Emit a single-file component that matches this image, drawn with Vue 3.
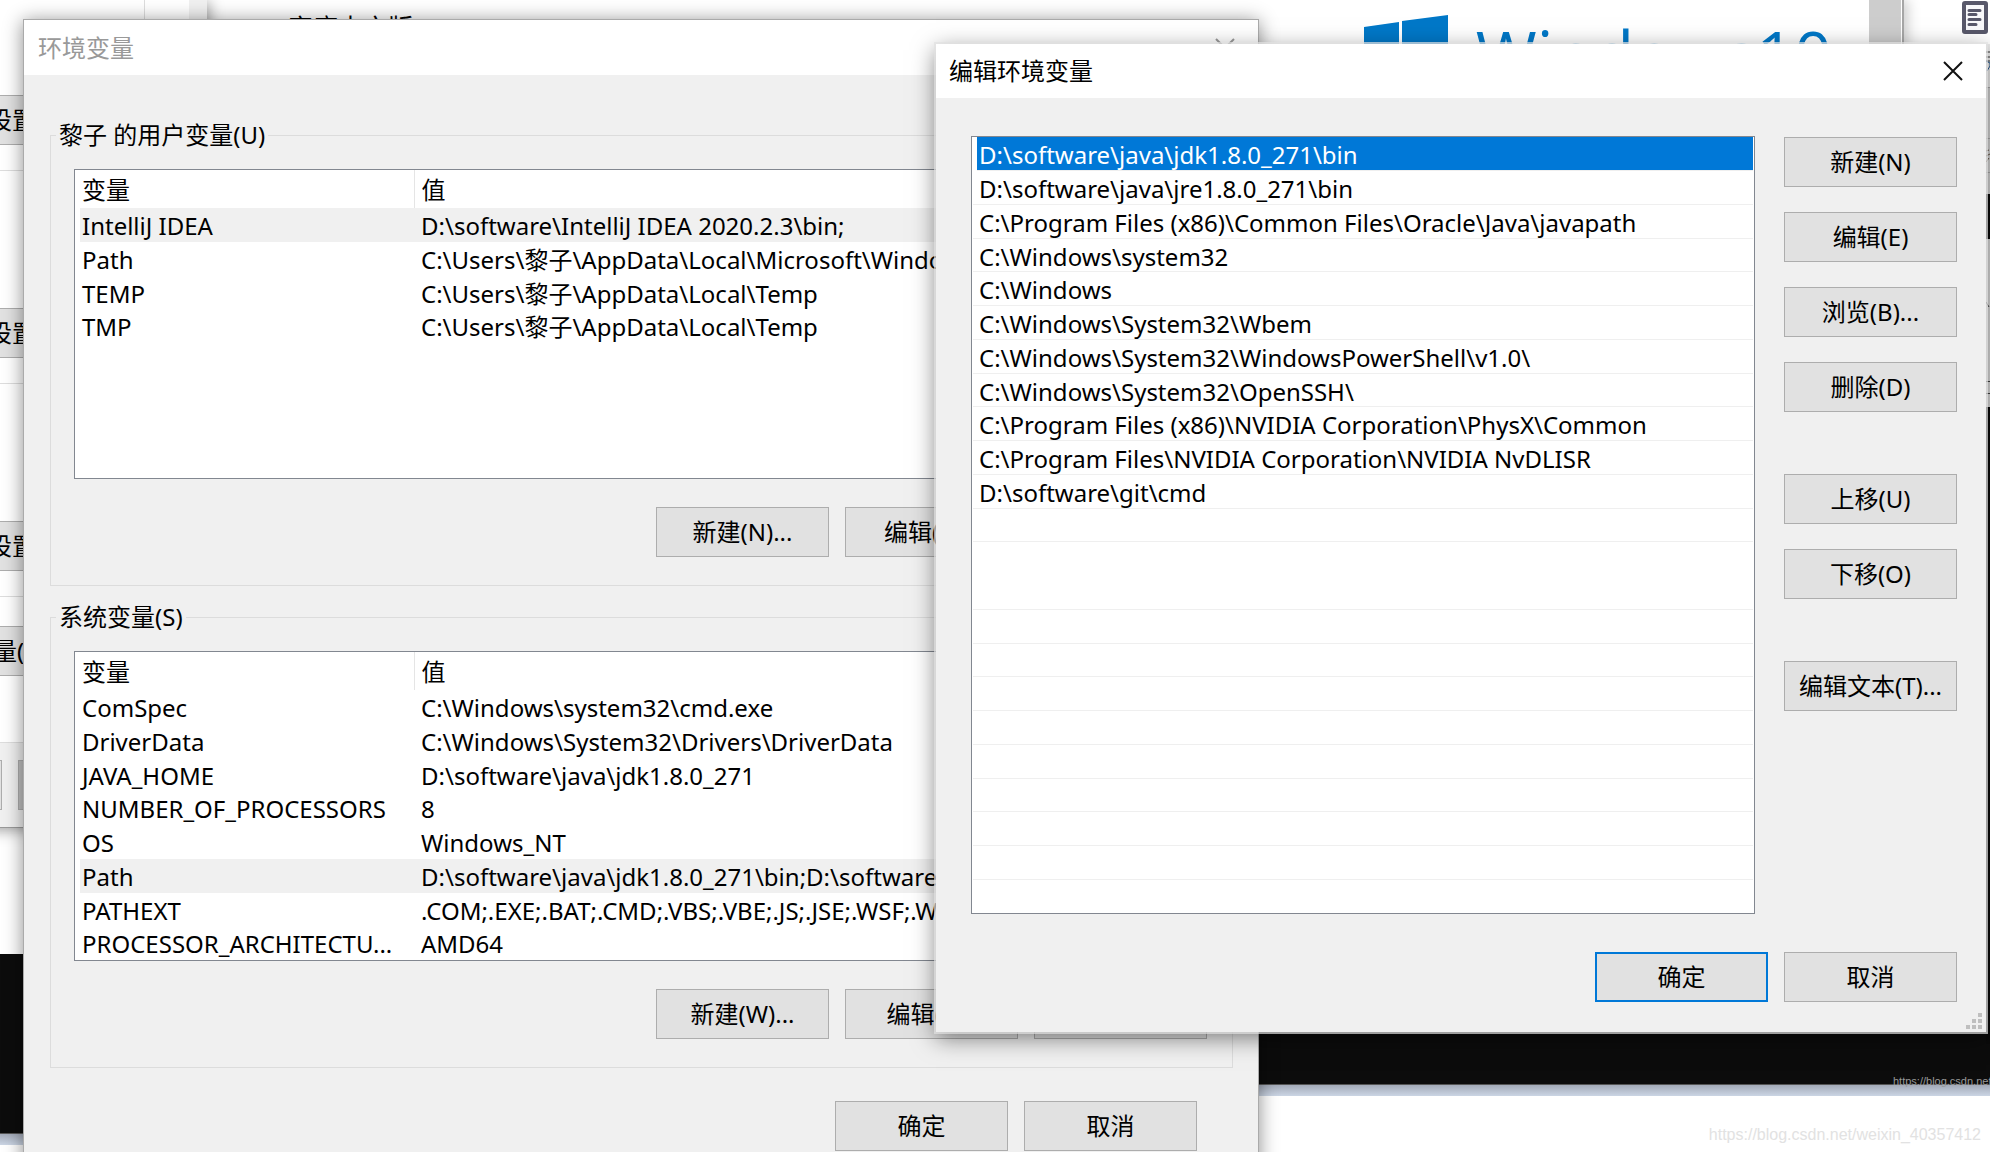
<script setup>
import { ref } from 'vue'

const userVars = [
  { name: 'IntelliJ IDEA', value: 'D:\\software\\IntelliJ IDEA 2020.2.3\\bin;' },
  { name: 'Path', value: 'C:\\Users\\黎子\\AppData\\Local\\Microsoft\\WindowsApps;' },
  { name: 'TEMP', value: 'C:\\Users\\黎子\\AppData\\Local\\Temp' },
  { name: 'TMP', value: 'C:\\Users\\黎子\\AppData\\Local\\Temp' },
]

const systemVars = [
  { name: 'ComSpec', value: 'C:\\Windows\\system32\\cmd.exe' },
  { name: 'DriverData', value: 'C:\\Windows\\System32\\Drivers\\DriverData' },
  { name: 'JAVA_HOME', value: 'D:\\software\\java\\jdk1.8.0_271' },
  { name: 'NUMBER_OF_PROCESSORS', value: '8' },
  { name: 'OS', value: 'Windows_NT' },
  { name: 'Path', value: 'D:\\software\\java\\jdk1.8.0_271\\bin;D:\\software\\java' },
  { name: 'PATHEXT', value: '.COM;.EXE;.BAT;.CMD;.VBS;.VBE;.JS;.JSE;.WSF;.WSH' },
  { name: 'PROCESSOR_ARCHITECTU...', value: 'AMD64' },
]

const groups = [
  { id: 'user', title: '黎子 的用户变量(U)', rows: userVars, picked: 0, actions: ['新建(N)...', '编辑(E)...', '删除(D)'] },
  { id: 'system', title: '系统变量(S)', rows: systemVars, picked: 5, actions: ['新建(W)...', '编辑(I)...', '删除(L)'] },
]

const paths = [
  'D:\\software\\java\\jdk1.8.0_271\\bin',
  'D:\\software\\java\\jre1.8.0_271\\bin',
  'C:\\Program Files (x86)\\Common Files\\Oracle\\Java\\javapath',
  'C:\\Windows\\system32',
  'C:\\Windows',
  'C:\\Windows\\System32\\Wbem',
  'C:\\Windows\\System32\\WindowsPowerShell\\v1.0\\',
  'C:\\Windows\\System32\\OpenSSH\\',
  'C:\\Program Files (x86)\\NVIDIA Corporation\\PhysX\\Common',
  'C:\\Program Files\\NVIDIA Corporation\\NVIDIA NvDLISR',
  'D:\\software\\git\\cmd',
  '', '', '', '', '', '', '', '', '', '', '',
]

const selected = ref(0)
const sideGroups = [
  ['新建(N)', '编辑(E)', '浏览(B)...', '删除(D)'],
  ['上移(U)', '下移(O)'],
  ['编辑文本(T)...'],
]
</script>

<template>
  <main class="desktop">
    <section class="console console-left"></section>
    <section class="console console-right">
      <span class="console-mark">https://blog.csdn.net</span>
    </section>

    <section class="about">
      <p class="edition">10 家庭中文版</p>
      <div class="brand">
        <svg class="flag" width="84" height="60" viewBox="0 0 84 60" aria-hidden="true">
          <path d="M0 12 35 7V60H0ZM38 6 84 0V60H38Z" fill="#0078c8" />
        </svg>
        <span class="brand-name">Windows<span class="brand-num">10</span></span>
      </div>
      <div class="scroll"></div>
    </section>

    <section class="edge">
      <svg class="doc" width="28" height="34" viewBox="0 0 28 34" aria-hidden="true">
        <rect x="3" y="3" width="22" height="29" rx="1" fill="#f8f8fa" stroke="#58586a" stroke-width="4" />
        <path d="M8 10.500H19M8 14.500H15M8 19.500H19M8 24.500H15" stroke="#58586a" stroke-width="3" stroke-linecap="round" />
      </svg>
      <svg class="slice" width="4" height="1044" viewBox="0 0 4 1044" aria-hidden="true">
        <path d="M0 44H4V367H0Z" fill="#d2d2d2" />
        <path d="M0 44H4V87H0Z" fill="#ececec" />
        <path d="M0 52H4M0 57H4M0 61H4" stroke="#333" />
        <path d="M0 61 4 63V66L1 71" stroke="#27598f" fill="none" />
        <path d="M0 87.500H4M0 138.500H4M0 172.500H4" stroke="#aaa" />
        <path d="M0 151 3 150M0 156 4 154M0 162 3 158" stroke="#665544" />
        <path d="M0 194H4V239H0ZM0 407H4V1044H0Z" fill="#0a0a0a" />
        <path d="M0 239H4V407H0Z" fill="#d8d8d8" />
        <path d="M0 239H2V407H0Z" fill="#e8e8e8" />
        <path d="M0 302 3 307M0 381.500H4M0 393.500H4" stroke="#444" />
      </svg>
    </section>

    <section class="sysprops">
      <div class="card card-a"><button type="button" class="btn back">设置(S)...</button></div>
      <div class="card card-b"><button type="button" class="btn back">设置(E)...</button></div>
      <div class="card card-b"><button type="button" class="btn back">设置(T)...</button></div>
      <div class="card card-c"><button type="button" class="btn back env-btn">环境变量(N)...</button></div>
      <footer class="sys-foot">
        <button type="button" class="btn foot-a" aria-label="确定"></button>
        <button type="button" class="btn foot-b" aria-label="取消"></button>
      </footer>
    </section>

    <section class="window env">
      <header class="titlebar">
        <h1 class="title">环境变量</h1>
        <button type="button" class="close" aria-label="关闭">
          <svg width="22" height="22" viewBox="0 0 22 22"><path d="M2 2 20 20M20 2 2 20" stroke="currentColor" stroke-width="2" /></svg>
        </button>
      </header>
      <div class="env-body">
        <fieldset v-for="g in groups" :key="g.id" class="group">
          <legend class="legend">{{ g.title }}</legend>
          <div class="table-box">
            <table class="vars">
              <thead>
                <tr><th class="name">变量</th><th>值</th></tr>
              </thead>
              <tbody>
                <tr v-for="(r, i) in g.rows" :key="r.name" :class="{ picked: i === g.picked }">
                  <td class="name">{{ r.name }}</td>
                  <td>{{ r.value }}</td>
                </tr>
              </tbody>
            </table>
          </div>
          <div class="actions">
            <button v-for="a in g.actions" :key="a" type="button" class="btn">{{ a }}</button>
          </div>
        </fieldset>
        <footer class="actions env-foot">
          <button type="button" class="btn">确定</button>
          <button type="button" class="btn">取消</button>
        </footer>
      </div>
    </section>

    <section class="window edit">
      <header class="titlebar">
        <h1 class="title">编辑环境变量</h1>
        <button type="button" class="close" aria-label="关闭">
          <svg width="22" height="22" viewBox="0 0 22 22"><path d="M2 2 20 20M20 2 2 20" stroke="currentColor" stroke-width="2" /></svg>
        </button>
      </header>
      <div class="edit-body">
        <ul class="paths" role="listbox" aria-label="Path">
          <li
            v-for="(p, i) in paths"
            :key="i"
            role="option"
            :aria-selected="i === selected"
            :class="['path', { selected: i === selected, plain: i === 12 }]"
            @click="p && (selected = i)"
          >{{ p }}</li>
        </ul>
        <div class="side">
          <div v-for="(s, i) in sideGroups" :key="i" class="side-group">
            <button v-for="b in s" :key="b" type="button" class="btn">{{ b }}</button>
          </div>
        </div>
      </div>
      <footer class="actions edit-foot">
        <button type="button" class="btn primary">确定</button>
        <button type="button" class="btn">取消</button>
      </footer>
      <svg class="grip" width="16" height="16" viewBox="0 0 16 16" aria-hidden="true">
        <path d="M12 0h4v4h-4zM6 6h4v4H6zM12 6h4v4h-4zM0 12h4v4H0zM6 12h4v4H6zM12 12h4v4h-4z" fill="#bfbfbf" />
      </svg>
    </section>

    <span class="watermark">https://blog.csdn.net/weixin_40357412</span>
  </main>
</template>

<style>
body {
  background: #fff;
}
</style>

<style scoped>
.desktop {
  position: relative;
  height: 100vh;
  overflow: hidden;
  background: #fff;
  color: #000;
  font-family: "Noto Sans", "Noto Sans CJK SC", sans-serif;
  font-size: 24px;
  line-height: 34px;
}

.desktop * {
  box-sizing: border-box;
}

.btn {
  width: 173px;
  height: 50px;
  padding: 0;
  border: 1px solid #adadad;
  background: #e1e1e1;
  color: #000;
  font: inherit;
  white-space: nowrap;
}

.btn.primary {
  border: 2px solid #0078d7;
}

/* windows behind the dialogs */
.console {
  position: absolute;
  background: #0c0c0c;
}

.console::after {
  content: "";
  position: absolute;
  left: 0;
  right: 0;
  top: 100%;
  height: 11px;
  border-top: 1px solid #555;
  background: linear-gradient(#a3aab8, #cbd5e4);
}

.console-left {
  left: 0;
  width: 300px;
  top: 954px;
  height: 179px;
  box-shadow: 0 200px 0 #e8e8e8;
}

.console-right {
  left: 1200px;
  right: 0;
  top: 1000px;
  height: 84px;
}

.console-mark {
  position: absolute;
  z-index: 1;
  left: 693px;
  bottom: -3px;
  height: 12px;
  overflow: hidden;
  color: #999;
  font-family: "Liberation Sans", sans-serif;
  font-size: 11px;
  line-height: 12px;
}

.about {
  position: absolute;
  left: 207px;
  right: 86px;
  top: 0;
  height: 300px;
  border-right: 2px solid #a6a6a6;
  background: #fff;
  box-shadow: 4px 0 12px rgba(0, 0, 0, 0.2);
}

.edition {
  position: absolute;
  left: 46px;
  top: 10px;
  margin: 0;
  font-size: 25px;
}

.brand {
  position: absolute;
  right: 70px;
  top: 15px;
  display: flex;
  gap: 28px;
}

.brand-name {
  display: flex;
  color: #0078c8;
  font-family: "Open Sans", sans-serif;
  font-size: 66px;
  line-height: 76px;
}

.scroll {
  position: absolute;
  right: 1px;
  top: 0;
  bottom: 0;
  width: 32px;
  background: #cdcdcd;
}

.edge {
  position: absolute;
  right: 0;
  top: 0;
}

.doc {
  position: absolute;
  right: 1px;
  top: 0;
}

.slice {
  display: block;
}

.sysprops {
  position: absolute;
  left: -100px;
  width: 307px;
  top: 0;
  height: 828px;
  display: flex;
  flex-direction: column;
  border-right: 18px solid #f0f0f0;
  border-bottom: 1px solid #999;
  background: #fff;
  box-shadow: 2px 2px 14px rgba(0, 0, 0, 0.4);
}

.card {
  display: flex;
  align-items: flex-end;
  padding-bottom: 25px;
  margin-right: 44px;
  border-right: 1px solid #ddd;
  border-bottom: 1px solid #ddd;
}

.card-a {
  height: 171px;
}

.card-b {
  height: 213px;
}

.card-c {
  height: 146px;
  padding-bottom: 66px;
}

.back {
  padding-left: 87px;
  text-align: left;
}

.env-btn {
  width: 240px;
  padding-left: 20px;
}

.sys-foot {
  flex: 1;
  display: flex;
  gap: 16px;
  padding: 17px 0 0;
  background: #f0f0f0;
}

.foot-a {
  width: 102px;
}

.foot-b {
  width: 120px;
  background: #c0c0c0;
}

/* dialogs */
.window {
  position: absolute;
  background: #f0f0f0;
}

.titlebar {
  display: flex;
  align-items: center;
  justify-content: space-between;
  height: 54px;
  padding-left: 13px;
  background: #fff;
}

.title {
  margin: 0;
  font-size: 24px;
  font-weight: 400;
}

.close {
  display: flex;
  padding: 22px;
  border: 0;
  background: none;
  color: #111;
}

.env {
  left: 23px;
  right: 731px;
  top: 19px;
  height: 1200px;
  border: 1px solid #aaa;
  box-shadow: 0 2px 18px rgba(0, 0, 0, 0.45);
}

.env .titlebar {
  height: 55px;
  padding-left: 14px;
}

.env .title,
.env .close {
  color: #999;
}

.env-body {
  padding: 43px 25px 0 26px;
}

.group {
  min-width: 0;
  margin: 0 0 14px;
  padding: 17px 25px 28px 23px;
  border: 1px solid #dcdcdc;
}

.legend {
  padding: 0 3px;
  margin-left: -18px;
}

.table-box {
  height: 310px;
  padding-left: 5px;
  overflow: hidden;
  border: 1px solid #828790;
  background: #fff;
}

.vars {
  width: 100%;
  border-collapse: collapse;
  table-layout: fixed;
}

.vars th {
  height: 38px;
  padding: 1px 7px 0;
  font-weight: 400;
  text-align: left;
}

.vars th.name {
  border-right: 1px solid #e5e5e5;
}

.vars td {
  height: 34px;
  padding: 0 7px;
  overflow: hidden;
  line-height: 33px;
  white-space: nowrap;
}

.vars tr:nth-child(4n) td {
  height: 33px;
}

.vars .name {
  width: 334px;
  padding-left: 2px;
  padding-right: 2px;
}

.picked {
  background: #f0f0f0;
}

.actions {
  display: flex;
  justify-content: flex-end;
  gap: 16px;
}

.group .actions {
  margin-top: 28px;
}

.env-foot {
  margin-top: 33px;
  padding-right: 36px;
}

.edit {
  left: 936px;
  right: 4px;
  top: 44px;
  padding-bottom: 30px;
  box-shadow: 0 0 0 2px rgba(225, 225, 225, 0.7), 0 6px 22px rgba(0, 0, 0, 0.5);
}

.edit-body {
  display: flex;
  gap: 29px;
  padding: 38px 29px 0 35px;
}

.paths {
  flex: 1;
  margin: 0;
  padding: 0 1px 33px;
  border: 1px solid #828790;
  background: #fff;
  list-style: none;
}

.path {
  height: 34px;
  padding-left: 6px;
  border-bottom: 1px solid #efefef;
  line-height: 35px;
  white-space: nowrap;
}

.path:nth-child(4n) {
  height: 33px;
}

.path.plain {
  border-bottom-color: #fff;
}

.path.selected {
  margin-left: 4px;
  padding-left: 2px;
  background: #0078d7;
  color: #fff;
}

.side {
  display: flex;
  flex-direction: column;
  gap: 62px;
  padding-top: 1px;
}

.side-group {
  display: flex;
  flex-direction: column;
  gap: 25px;
}

.edit-foot {
  margin-top: 38px;
  padding-right: 29px;
}

.grip {
  position: absolute;
  right: 4px;
  bottom: 3px;
}

.watermark {
  position: absolute;
  right: 9px;
  bottom: 7px;
  color: #e2e2e2;
  font-family: "Liberation Sans", sans-serif;
  font-size: 16px;
  line-height: 20px;
}
</style>
